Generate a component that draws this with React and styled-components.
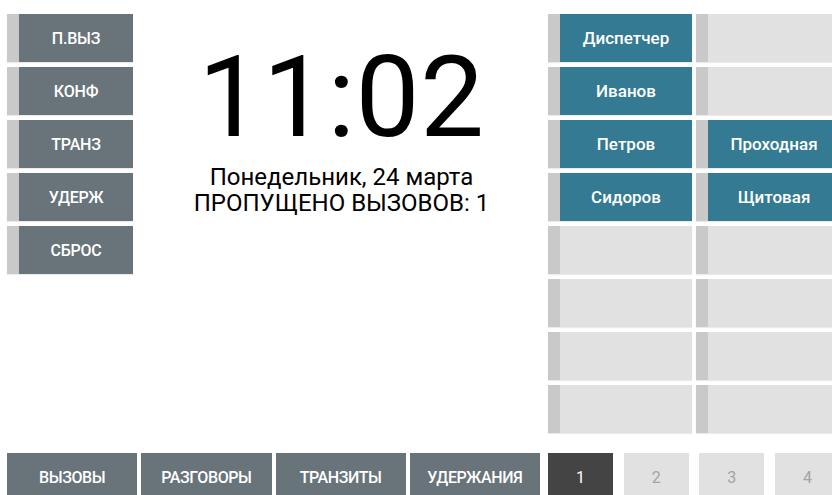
import React from "react";
import styled, { createGlobalStyle } from "styled-components";

const GlobalStyle = createGlobalStyle`
  html, body {
    margin: 0;
    padding: 0;
    background: #ffffff;
    overflow: hidden;
  }
  body {
    font-family: Roboto, "Noto Sans", Arial, sans-serif;
  }
`;

const Screen = styled.div`
  width: 840px;
  height: 508px;
  box-sizing: border-box;
  padding: 14px 0 0 7px;
  display: grid;
  grid-template-columns: 533px 292px;
  grid-template-rows: 419px 48px;
  column-gap: 8px;
  row-gap: 20px;
`;

const Top = styled.div`
  display: grid;
  grid-template-columns: 126px 1fr;
`;

const KeyColumn = styled.div`
  display: flex;
  flex-direction: column;
  gap: 5px;
`;

/* A key with a grey status strip down its left edge */
const Key = styled.button`
  all: unset;
  box-sizing: border-box;
  height: 48px;
  display: flex;
  align-items: center;
  justify-content: center;
  padding-left: 12px;
  background: ${(p) => p.$bg};
  box-shadow: inset 12px 0 0 #c9c9c9, 0 1px 1px rgba(0, 0, 0, 0.08);
  color: #ffffff;
  font-family: Roboto, sans-serif;
  font-weight: 500;
  font-size: ${(p) => (p.$contact ? "17px" : "16px")};
  letter-spacing: ${(p) => (p.$contact ? "0" : "-0.2px")};
  white-space: nowrap;
  overflow: hidden;
`;

const Clock = styled.div`
  display: flex;
  flex-direction: column;
  align-items: center;
  padding-left: 10px;
  color: #000000;
`;

const Time = styled.div`
  font-family: Roboto, sans-serif;
  font-size: 114px;
  font-weight: 400;
  line-height: 114px;
  margin-top: 26px;
  letter-spacing: 0.5px;
`;

const Info = styled.div`
  margin-top: 10px;
  display: flex;
  flex-direction: column;
  align-items: center;
`;

const InfoLine = styled.div`
  font-family: Roboto, sans-serif;
  font-size: 24px;
  line-height: 26px;
  white-space: nowrap;
`;

const Speed = styled.div`
  display: grid;
  grid-template-columns: 144px 144px;
  grid-auto-rows: 48px;
  column-gap: 4px;
  row-gap: 5px;
`;

const TabBar = styled.div`
  display: grid;
  grid-template-columns: repeat(4, 1fr);
  column-gap: 4px;
`;

const Tab = styled.button`
  all: unset;
  box-sizing: border-box;
  display: flex;
  align-items: center;
  justify-content: center;
  background: #68737a;
  color: #ffffff;
  font-family: Roboto, sans-serif;
  font-weight: 500;
  font-size: 16px;
  letter-spacing: -0.4px;
`;

const Pages = styled.div`
  display: flex;
  justify-content: space-between;
`;

const Page = styled.button`
  all: unset;
  box-sizing: border-box;
  width: 65px;
  display: flex;
  align-items: center;
  justify-content: center;
  background: ${(p) => (p.$active ? "#444444" : "#e1e1e1")};
  color: ${(p) => (p.$active ? "#ffffff" : "#a3a3a3")};
  font-family: Roboto, sans-serif;
  font-size: 16px;
  font-weight: 400;
`;

const functionKeys = ["П.ВЫЗ", "КОНФ", "ТРАНЗ", "УДЕРЖ", "СБРОС"];

const speedDial = [
  ["Диспетчер", ""],
  ["Иванов", ""],
  ["Петров", "Проходная"],
  ["Сидоров", "Щитовая"],
  ["", ""],
  ["", ""],
  ["", ""],
  ["", ""],
];

const tabs = ["ВЫЗОВЫ", "РАЗГОВОРЫ", "ТРАНЗИТЫ", "УДЕРЖАНИЯ"];

export default function App() {
  return (
    <>
      <GlobalStyle />
      <Screen>
        <Top>
          <KeyColumn>
            {functionKeys.map((k) => (
              <Key key={k} $bg="#68737a">
                {k}
              </Key>
            ))}
          </KeyColumn>
          <Clock>
            <Time>11:02</Time>
            <Info>
              <InfoLine>Понедельник, 24 марта</InfoLine>
              <InfoLine>ПРОПУЩЕНО ВЫЗОВОВ: 1</InfoLine>
            </Info>
          </Clock>
        </Top>
        <Speed>
          {speedDial.flat().map((name, i) => (
            <Key key={i} $contact $bg={name ? "#337a92" : "#e1e1e1"}>
              {name}
            </Key>
          ))}
        </Speed>
        <TabBar>
          {tabs.map((t) => (
            <Tab key={t}>{t}</Tab>
          ))}
        </TabBar>
        <Pages>
          {[1, 2, 3, 4].map((n) => (
            <Page key={n} $active={n === 1}>
              {n}
            </Page>
          ))}
        </Pages>
      </Screen>
    </>
  );
}
